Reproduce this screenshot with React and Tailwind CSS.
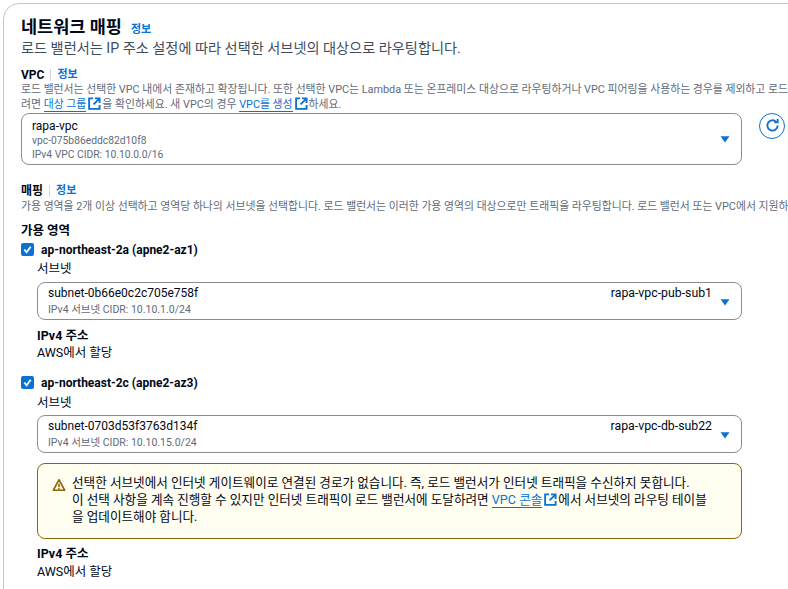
const fontStack = { fontFamily: 'Roboto, "Noto Sans CJK KR", sans-serif' };

function ExternalIcon() {
  return (
    <svg viewBox="0 0 14 14" className="mr-[1px] ml-[2px] inline-block h-[13px] w-[13px] align-[-2px]" fill="none" stroke="#0972d3" strokeWidth="2">
      <path d="M5.5 1.5H1.2v11.3h11.3V8.5" />
      <path d="M7.5 1.5h5v5M12 2L6 8" />
    </svg>
  );
}

function Caret() {
  return (
    <svg viewBox="0 0 10 8" className="h-[8px] w-[10px] shrink-0" fill="#0972d3">
      <path d="M0.5 1.2h9L5 7.6z" />
    </svg>
  );
}

function Info() {
  return <span className="text-[11px] font-bold text-[#0972d3]">정보</span>;
}

function FieldLabel({ children }) {
  return (
    <div className="flex items-center text-[12px] leading-[16px] font-bold text-[#000716]">
      {children}
      <span className="mx-[6px] h-[12px] w-px bg-[#d1d5db]" />
      <Info />
    </div>
  );
}

function SubnetSelect({ id, cidr, name }) {
  return (
    <div className="mt-[5px] flex w-[705px] items-start rounded-[8px] border border-[#8c8c94] py-[2px] pr-[11px] pl-[10px]">
      <div className="flex-1">
        <div className="text-[12px] leading-[16px] text-[#000716]">{id}</div>
        <div className="mt-[2px] text-[10.5px] leading-[14px] text-[#5f6b7a]">{cidr}</div>
      </div>
      <div className="text-[12.3px] leading-[16px] text-[#000716]">{name}</div>
      <div className="mt-[13px] ml-[8px]">
        <Caret />
      </div>
    </div>
  );
}

function Address({ lineGap }) {
  return (
    <div className="text-[12.5px] leading-[17px] text-[#000716]">
      <div className="font-bold">IPv4 주소</div>
      <div className={lineGap}>AWS에서 할당</div>
    </div>
  );
}

function ZoneHeader({ label }) {
  return (
    <div className="flex items-center gap-[7px]">
      <span className="flex h-[13px] w-[13px] items-center justify-center rounded-[2px] bg-[#0972d3]">
        <svg viewBox="0 0 12 12" className="h-[11px] w-[11px]" fill="none" stroke="white" strokeWidth="2">
          <path d="M2.5 6l2.5 3 4.5-6" />
        </svg>
      </span>
      <span className="text-[12px] leading-[16px] font-bold text-[#000716]">{label}</span>
    </div>
  );
}

export default function App() {
  return (
    <div className="h-[589px] w-[788px] overflow-hidden bg-white" style={fontStack}>
      <div className="mt-[3px] ml-[3px] h-[640px] w-[1000px] rounded-tl-[16px] border border-[#c6c6cd] pt-[12px] pl-[17px]">
        <div className="flex items-baseline gap-[9px]">
          <h2 className="text-[17.5px] leading-[22px] font-bold text-[#000716]">네트워크 매핑</h2>
          <Info />
        </div>
        <p className="mt-[1px] text-[14.2px] leading-[17px] text-[#414d5c]">
          로드 밸런서는 IP 주소 설정에 따라 선택한 서브넷의 대상으로 라우팅합니다.
        </p>

        <div className="mt-[10px]">
          <FieldLabel>VPC</FieldLabel>
          <div className="text-[10.85px] leading-[14px] whitespace-nowrap text-[#5f6b7a]">
            <div>
              로드 밸런서는 선택한 VPC 내에서 존재하고 확장됩니다. 또한 선택한 VPC는 Lambda 또는 온프레미스 대상으로 라우팅하거나 VPC 피어링을 사용하는 경우를 제외하고 로드 밸
            </div>
            <div>
              려면 <span className="border-b border-[#0972d3] text-[#0972d3]">대상 그룹</span>
              <ExternalIcon />을 확인하세요. 새 VPC의 경우 <span className="border-b border-[#0972d3] text-[#0972d3]">VPC를 생성</span>
              <ExternalIcon />하세요.
            </div>
          </div>
          <div className="mt-[1px] flex items-start">
            <div className="flex h-[52px] w-[721px] items-center justify-between rounded-[8px] border border-[#8c8c94] pr-[11px] pl-[10px]">
              <div className="mt-[2px]">
                <div className="text-[12px] leading-[16px] text-[#000716]">rapa-vpc</div>
                <div className="text-[10.3px] leading-[14px] text-[#5f6b7a]">vpc-075b86eddc82d10f8</div>
                <div className="text-[10.3px] leading-[14px] text-[#5f6b7a]">IPv4 VPC CIDR: 10.10.0.0/16</div>
              </div>
              <Caret />
            </div>
            <div className="ml-[17px] flex h-[26px] w-[26px] items-center justify-center rounded-full border border-[#0972d3]">
              <svg viewBox="0 0 16 16" className="h-[15px] w-[15px]" fill="none" stroke="#0972d3" strokeWidth="2">
                <path d="M13.5 8a5.5 5.5 0 1 1-1.8-4.1" />
                <path d="M13.5 1v3.5H10" />
              </svg>
            </div>
          </div>
        </div>

        <div className="mt-[18px]">
          <FieldLabel>매핑</FieldLabel>
          <p className="text-[10.85px] leading-[16px] whitespace-nowrap text-[#5f6b7a]">
            가용 영역을 2개 이상 선택하고 영역당 하나의 서브넷을 선택합니다. 로드 밸런서는 이러한 가용 영역의 대상으로만 트래픽을 라우팅합니다. 로드 밸런서 또는 VPC에서 지원하
          </p>
          <div className="mt-[8px] text-[12.5px] leading-[16px] font-bold text-[#000716]">가용 영역</div>
        </div>

        <div className="mt-[3px]">
          <ZoneHeader label="ap-northeast-2a (apne2-az1)" />
          <div className="ml-[16px]">
            <div className="mt-[3px] text-[12.5px] leading-[16px] text-[#000716]">서브넷</div>
            <SubnetSelect id="subnet-0b66e0c2c705e758f" cidr="IPv4 서브넷 CIDR: 10.10.1.0/24" name="rapa-vpc-pub-sub1" />
            <div className="mt-[7px]">
              <Address />
            </div>
          </div>
        </div>

        <div className="mt-[14px]">
          <ZoneHeader label="ap-northeast-2c (apne2-az3)" />
          <div className="ml-[16px]">
            <div className="mt-[4px] text-[12.5px] leading-[15px] text-[#000716]">서브넷</div>
            <SubnetSelect id="subnet-0703d53f3763d134f" cidr="IPv4 서브넷 CIDR: 10.10.15.0/24" name="rapa-vpc-db-sub22" />
            <div className="mt-[10px] flex h-[76px] w-[705px] items-start rounded-[8px] border border-[#8d6605] bg-[#fffef0] pt-[10px] pl-[14px]">
              <svg viewBox="0 0 16 16" className="mt-[4px] mr-[6px] h-[14px] w-[14px] shrink-0" fill="none" stroke="#8d6605" strokeWidth="1.8">
                <path d="M8 2L1.5 14h13z" strokeLinejoin="round" />
                <path d="M8 6.5v4M8 11.5v1.5" />
              </svg>
              <div className="text-[12.6px] leading-[17px] text-[#000716]">
                <div>선택한 서브넷에서 인터넷 게이트웨이로 연결된 경로가 없습니다. 즉, 로드 밸런서가 인터넷 트래픽을 수신하지 못합니다.</div>
                <div>
                  이 선택 사항을 계속 진행할 수 있지만 인터넷 트래픽이 로드 밸런서에 도달하려면 <span className="border-b border-[#0972d3] text-[#0972d3]">VPC 콘솔</span>
                  <ExternalIcon />에서 서브넷의 라우팅 테이블
                </div>
                <div>을 업데이트해야 합니다.</div>
              </div>
            </div>
            <div className="mt-[6px]">
              <Address lineGap="mt-[1px]" />
            </div>
          </div>
        </div>
      </div>
    </div>
  );
}
